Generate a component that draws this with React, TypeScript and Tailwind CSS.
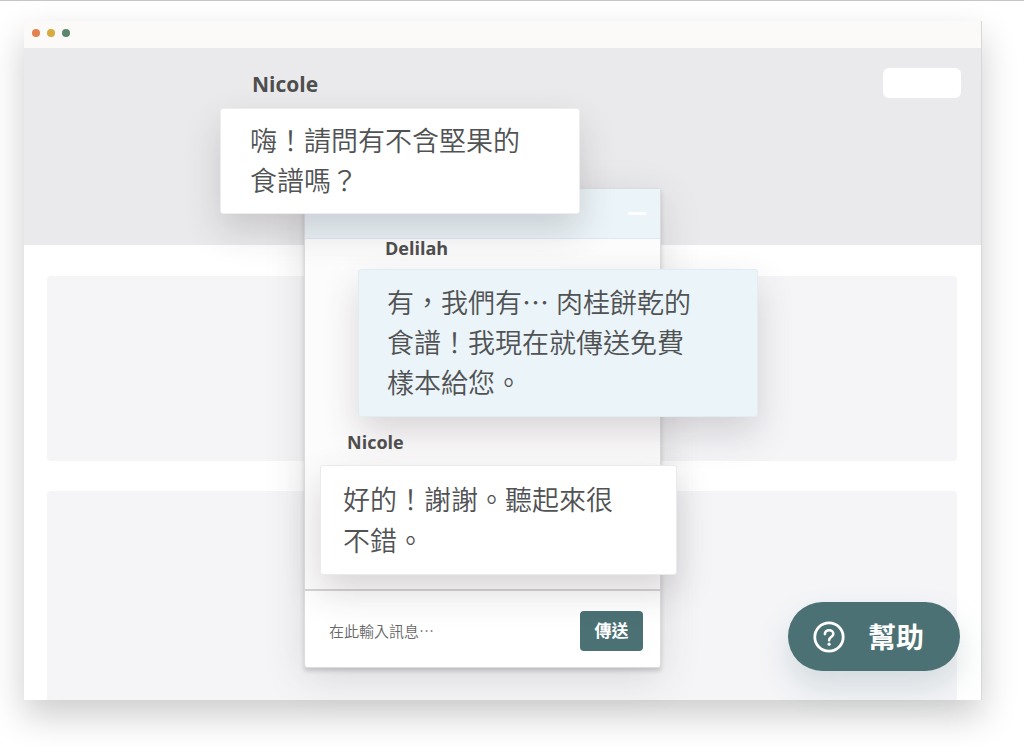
import { clsx } from 'clsx';

type MessageProps = {
  name: string;
  lines: string[];
  nameClass: string;
  bubbleClass: string;
};

function Message({ name, lines, nameClass, bubbleClass }: MessageProps) {
  return (
    <div className="relative">
      <h3 className={clsx('font-bold text-[#4e4e4e]', nameClass)}>{name}</h3>
      <p
        className={clsx(
          'rounded-[3px] border text-[27px] font-[350] text-[#505254] shadow-[0_16px_36px_rgba(60,50,52,0.19)]',
          bubbleClass
        )}
      >
        {lines.map((line) => (
          <span key={line} className="block whitespace-nowrap">
            {line}
          </span>
        ))}
      </p>
    </div>
  );
}

function ChatWidget() {
  return (
    // sits on top of the page, first bubble pokes out above the panel
    <div className="absolute top-[51px] left-[196px] w-[538px]">
      <div className="relative z-10">
        <Message
          name="Nicole"
          lines={['嗨！請問有不含堅果的', '食譜嗎？']}
          nameClass="ml-8 text-[21px] leading-6"
          bubbleClass="mt-3 w-[360px] border-[#ededed] bg-white px-[29px] py-3 leading-10"
        />
      </div>

      <section className="-mt-[26px] ml-[84px] w-[357px] rounded-[3px] border border-[#dcdcde] bg-white shadow-[0_3px_4px_rgba(0,0,0,0.16),0_10px_40px_rgba(60,45,48,0.15)]">
        <header className="flex h-[50px] items-center justify-end border-b border-[#dce8f4] bg-[#ebf4f8] pr-3.5">
          <button type="button" aria-label="最小化" className="flex h-5 items-center">
            <span className="block h-[3px] w-[18px] rounded-full bg-white" />
          </button>
        </header>

        <div className="bg-[#fdfcfd] pb-3.5">
          <Message
            name="Delilah"
            lines={['有，我們有⋯ 肉桂餅乾的', '食譜！我現在就傳送免費', '樣本給您。']}
            nameClass="ml-20 text-[18px] leading-[18px]"
            bubbleClass="mt-3 ml-[53px] w-[400px] border-[#e2edf2] bg-[#ebf4f8] px-7 py-[13px] leading-10"
          />
          <div className="pt-4">
            <Message
              name="Nicole"
              lines={['好的！謝謝。聽起來很', '不錯。']}
              nameClass="ml-[42px] text-[18px] leading-[18px]"
              bubbleClass="mt-3.5 ml-[15px] w-[357px] border-[#e8ebec] bg-white px-[22px] py-[13px] leading-[41px]"
            />
          </div>
        </div>

        <form
          className="flex h-[78px] items-center justify-between border-t-2 border-[#d5d4d5] pt-1 pr-[17px] pl-6"
          onSubmit={(e) => e.preventDefault()}
        >
          <input
            type="text"
            aria-label="訊息"
            placeholder="在此輸入訊息⋯"
            className="h-10 min-w-0 flex-1 bg-transparent text-[15px] font-[350] text-[#686868] outline-none placeholder:text-[#686868]"
          />
          <button
            type="submit"
            className="h-10 w-[63px] rounded-[4px] bg-[#4b7175] text-[17px] font-bold text-white"
          >
            傳送
          </button>
        </form>
      </section>
    </div>
  );
}

function HelpButton() {
  return (
    <button
      type="button"
      className="absolute right-[21px] bottom-[29px] flex h-[69px] w-[172px] items-center rounded-full bg-[#4b7175] pl-6 text-[28px] font-bold text-white shadow-[0_16px_32px_rgba(75,113,117,0.2)]"
    >
      <svg width="34" height="34" viewBox="0 0 34 34" fill="none" stroke="currentColor" className="mr-[22px]">
        <circle cx="17" cy="17" r="14.2" strokeWidth="2.8" />
        <path
          d="M12.9 14.1c0-2.3 1.8-3.9 4.2-3.9s4.2 1.5 4.2 3.7c0 3.2-4.2 3.1-4.2 6.3"
          strokeWidth="2.6"
          strokeLinecap="round"
        />
        <circle cx="17.1" cy="24.2" r="1.6" fill="currentColor" stroke="none" />
      </svg>
      幫助
    </button>
  );
}

export default function App() {
  return (
    <div className="border-t border-[#c6c6c6] bg-white pt-5 pr-[42px] pb-[46px] pl-6 font-['Open_Sans','Noto_Sans_CJK_TC',sans-serif]">
      <main className="relative border-r border-[#d8d8d8] bg-white shadow-[0_16px_34px_rgba(0,0,0,0.2)]">
        <div className="flex h-[27px] items-center gap-[7px] bg-[#fcfaf8] px-2 pb-1">
          <span className="size-2 rounded-full bg-[#e2834f]" />
          <span className="size-2 rounded-full bg-[#d5ac3d]" />
          <span className="size-2 rounded-full bg-[#5c856d]" />
        </div>
        <div className="flex h-[197px] items-start justify-end bg-[#eaeaec] px-5 py-5">
          <div className="h-[30px] w-[78px] rounded-md bg-white" />
        </div>
        <div className="space-y-[30px] pt-[31px] pr-6 pl-[23px]">
          <div className="h-[185px] rounded-[4px] bg-[#f5f5f8]" />
          <div className="h-[209px] rounded-t-[4px] bg-[#f5f5f8]" />
        </div>

        <ChatWidget />
        <HelpButton />
      </main>
    </div>
  );
}
